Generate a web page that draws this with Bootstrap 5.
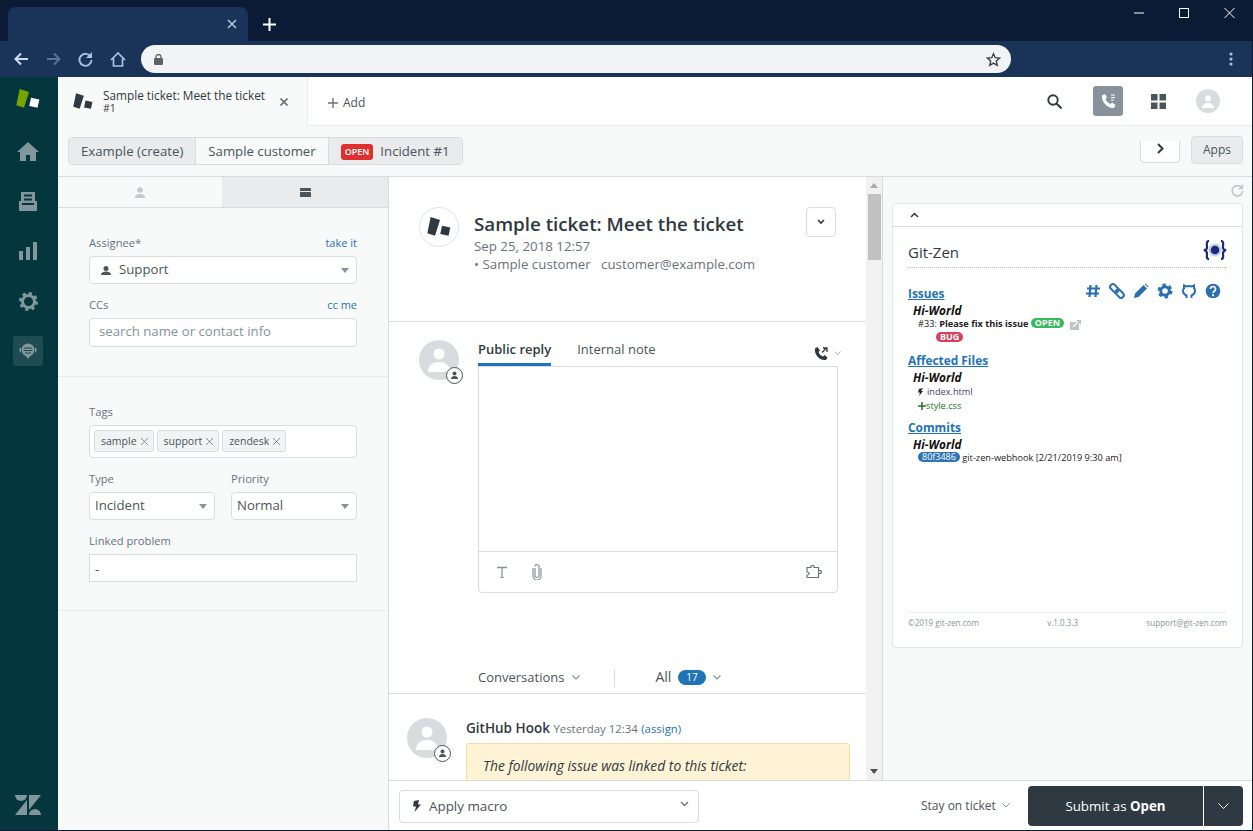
<!doctype html>
<html lang="en"><head><meta charset="utf-8"><title>Sample ticket</title>
<link href="https://cdn.jsdelivr.net/npm/bootstrap@5.3.0/dist/css/bootstrap.min.css" rel="stylesheet">
<style>
html,body{height:831px;overflow:hidden}
body{background:#0b1a35;font-family:"Open Sans","Noto Sans",sans-serif;color:#2f3941;font-size:13.2px;line-height:20px}
svg{display:block;flex:none}
.bw-strip{height:41px;padding-left:8px;background:#0b1a35}
.bw-tab{width:240px;height:34px;margin-top:7px;background:#1a3358;border-radius:8px 8px 0 0;padding-right:11px}
.bw-new{margin-left:15px;margin-top:18px}
.bw-ctrls{margin-left:auto;gap:35px;padding:6px 18px 0 0}
.bw-bar{height:36px;background:#1a3358;padding-left:14px;width:1252px}
.bw-nav{gap:17px;width:127px}
.bw-omni{width:870px;height:28px;background:#f1f3f4;border-radius:14px;padding:0 10px 0 13px}
.bw-menu{margin-left:auto;margin-right:19px}
.zd-app{width:1252px;height:753px}
.zd-rail{width:58px;background:#03363d;padding:12px 2px 15px 0}
.zd-railitem{width:30px;height:30px;border-radius:3px;margin-bottom:20px}
.zd-railitem.on{background:#1f4c53}
.zd-mark{margin-bottom:27px}
.zd-top{height:49px;background:#fff}
.zd-tab{width:250px;background:#f8f9f9;padding:0 19px 0 15px;border-right:1px solid #e9ebed;height:49px;margin-bottom:-1px;position:relative;z-index:1}
.zd-tabtitle{font-size:11.8px;line-height:13px;margin-left:10px;width:170px;white-space:nowrap}
.zd-tabtitle small{font-size:10.5px;display:block;line-height:12px}
.zd-add{font-size:12px;color:#49545c;margin-left:20px;gap:5px;padding-top:3px}
.zd-topright{margin-left:auto;margin-right:32px}
.zd-search{margin-right:31px}
.zd-call{width:30px;height:30px;background:#87929d;border-radius:3px;margin-right:28px}
.zd-grid{margin-right:30px}
.zd-face{width:24px;height:24px;border-radius:50%;background:#d8dcde}
.zd-topline{border-bottom:1px solid #e9ebed}
.zd-sub{height:51px;background:#f8f9f9;border-bottom:1px solid #d8dcde;padding:11px 9px 0 10px}
.zd-crumbs{height:28px;border:1px solid #d8dcde;border-radius:4px;overflow:hidden}
.zd-crumb{padding:0 12px;height:26px;line-height:26px;color:#49545c;background:#e9ebed;border-left:1px solid #d8dcde;white-space:nowrap}
.zd-crumb:first-child{border-left:0}
.zd-crumb.on{background:#f8f9f9}
.zd-open{background:#e02f2f;color:#fff;font-size:9px;font-weight:600;border-radius:3px;padding:0 4px;height:16px;line-height:16px;margin-right:7px;display:inline-block;vertical-align:1px}
.zd-next{width:40px;height:22px;margin-top:4px;padding-bottom:6px;border:1px solid #d8dcde;border-top:0;border-radius:0 0 4px 4px;background:#fff;margin-left:auto;margin-right:11px}
.zd-apps{width:52px;height:28px;margin-top:-1px;background:#e9ebed;border:1px solid #d8dcde;border-radius:4px;font-size:12px;line-height:26px;text-align:center;color:#49545c}
.zd-body{height:653px}
.zd-rowmain{height:603px}
.zd-left{width:331px;background:#f8f9f9;border-right:1px solid #d8dcde}
.zd-ltabs{height:31px;border-bottom:1px solid #d8dcde}
.zd-ltabs>div{height:30px}
.zd-ltabs>div:last-child{background:#e9ebed;width:166px;border-left:1px solid #e9ebed}
.zd-sec{padding:27px 31px 29px;border-bottom:1px solid #e9ebed}
.zd-sec.two{padding:27px 31px 28px}
.zd-lab{height:21px;font-size:11.2px;line-height:16px;color:#68737d;white-space:nowrap}
.zd-lab.gap{margin-top:13px}
.zd-link{font-size:11px;color:#1f73b7;margin-left:auto}
.zd-sel{height:28px;background:#fff;border:1px solid #d8dcde;border-radius:4px;padding:0 7px 0 5px;color:#49545c;line-height:25px}
.zd-sel>span:first-of-type{padding-bottom:1px}
.zd-pi{margin:0 8px 0 6px}
.zd-caret{width:0;height:0;border:4px solid transparent;border-top:5px solid #87929d;border-bottom:0;margin-left:auto;padding:0!important}
.zd-in{height:29px;background:#fff;border:1px solid #d8dcde;border-radius:4px;padding:0 9px;color:#87929d;line-height:25px}
.zd-tags{height:33px;background:#fff;border:1px solid #d8dcde;border-radius:4px;padding:4px;gap:3px}
.zd-pill{height:22px;padding:0 5px 0 6px;background:#f2f3f4;border:1px solid #d8dcde;border-radius:3px;font-size:10.5px;line-height:20px;color:#49545c;gap:4px}
.zd-mt{margin-top:13px}
.zd-two{gap:16px}
.zd-two>div{flex:1}
.zd-lp{height:28px;background:#fff;border:1px solid #d8dcde;padding:0 5px;line-height:28px;color:#49545c}
.zd-mid{width:477px;background:#fff;overflow:hidden}
.zd-head{height:145px;padding:30px 30px 0;border-bottom:1px solid #d8dcde}
.zd-circ{width:40px;height:40px;border-radius:50%;border:1px solid #e0e3e5}
.zd-ttl{margin-left:15px}
.zd-ttl h1{font-size:18.750px;font-weight:600;line-height:24px;margin:5px 0 1px;color:#2f3941;white-space:nowrap}
.zd-ttl p{margin:0;font-size:13.300px;line-height:18px;color:#68737d;white-space:nowrap}
.zd-more{width:30px;height:30px;border:1px solid #d8dcde;border-radius:4px;margin-left:auto}
.zd-reply{padding:18px 28px 0 30px;gap:19px}
.zd-av{width:40px;height:40px;border-radius:50%;background:#d8dcde;position:relative;flex:none}
.zd-avbadge{position:absolute;right:-4px;bottom:-4px;width:17px;height:17px;border-radius:50%;background:#fff;border:1px solid #49545c}
.zd-rbody{width:360px}
.zd-rtabs{height:26px}
.zd-rtab{height:26px;margin-right:26px;line-height:18px;color:#49545c;white-space:nowrap;font-size:13px}
.zd-rtab.on{color:#2f3941;font-weight:600;border-bottom:3px solid #1f73b7}
.zd-rcall{margin-left:auto;gap:5px;margin-right:-3px}
.zd-edit{height:227px;border:1px solid #d8dcde;border-radius:0 0 4px 4px}
.zd-area{height:185px;border-bottom:1px solid #d8dcde}
.zd-tools{height:40px;padding:0 15px 0 17px;gap:24px}
.zd-conv{height:101px;padding:0 0 6px 89px;border-bottom:1px solid #d8dcde;color:#49545c;font-size:13px}
.zd-sep{width:1px;height:18px;background:#d8dcde;margin:0 40px 0 34px}
.zd-all{font-size:14px;color:#49545c}
.zd-cnt{background:#1f73b7;color:#fff;font-size:10px;line-height:15px;height:15px;padding:0 8px;border-radius:8px;margin:0 7px 0 7px}
.zd-cmt{padding:24px 16px 0 18px;gap:19px}
.zd-who{font-size:13.500px;font-weight:600;line-height:20px;white-space:nowrap;color:#2f3941}
.zd-who span{font-size:11.400px;font-weight:400;color:#68737d}
.zd-who b{font-size:11.400px;font-weight:400;color:#1f73b7}
.zd-note{width:384px;height:60px;margin-top:4px;background:#fff3d6;border:1px solid #f7dca0;border-radius:3px;padding:12px 16px;font-style:italic;font-size:13.850px;color:#2f3941;white-space:nowrap}
.zd-scroll{width:17px;background:#f1f1f1;border-right:1px solid #d8dcde;padding-top:17px;height:603px}
.zd-thumb{width:13px;height:66px;background:#c1c1c1;margin-left:2px}
.zd-up,.zd-down{position:absolute;left:4px;width:0;height:0;border:4px solid transparent}
.zd-up{top:6px;border-bottom:5px solid #a8a8a8;border-top:0}
.zd-down{bottom:6px;border-top:5px solid #505050;border-bottom:0}
.zd-rpanel{flex:1;background:#f8f9f9;padding:7px 9px 0 9px;height:603px}
.zd-refresh{height:19px;justify-content:flex-end;margin-right:-1px}
.zd-appcard{height:445px;border:1px solid #e3e6e8;border-radius:4px;background:#fff}
.zd-apphead{height:23px;border-bottom:1px solid #d8dcde;padding-left:17px}
.zd-appbody{padding:13px 15px 0}
.zd-apptitle{height:28px;border-bottom:1px dotted #b5b5b5;font-size:15px;line-height:24px;color:#2f3941}
.zd-issuerow{margin-top:17px}
.zd-sect{font-size:11.900px;font-weight:700;line-height:16px;color:#1f73b7;text-decoration:underline;white-space:nowrap}
.zd-sect.next{display:block;margin-top:7px}
.zd-ic{gap:8px;margin-left:auto;margin-right:6px;margin-top:-2px}
.zd-repo{font-size:11.800px;font-style:italic;font-weight:700;color:#111;line-height:14px;margin:2px 0 0 5px}
.zd-line{font-size:9.200px;line-height:14px;margin-left:10px;color:#222;white-space:nowrap}
.zd-line.file{margin-top:1px;color:#3b3f78}
.zd-line.add{line-height:13px;color:#257325}
.zd-bugline{padding-left:18px}
.zd-pillb{display:inline-block;font-size:9px;font-weight:700;color:#fff;border-radius:7px;padding:0 4px;line-height:10px;vertical-align:1px}
.zd-foot{border-top:1px solid #e9ebed;font-size:8.100px;color:#87929d;line-height:20px;white-space:nowrap;margin-top:147px}
.zd-bot{height:50px;background:#fff;border-top:1px solid #d8dcde}
.zd-botleft{width:331px;background:#f8f9f9;border-right:1px solid #d8dcde;height:50px;margin-top:-1px}
.zd-macro{width:300px;height:33px;margin:9px 0 0 10px;border:1px solid #d8dcde;border-radius:4px;padding:0 9px 2px 13px;gap:8px;color:#49545c;font-size:13.400px}
.zd-stay{margin-left:222px;gap:6px;font-size:12px;color:#49545c;white-space:nowrap;width:107px}
.zd-subbtn{width:175px;height:40px;background:#2f3941;color:#fff;border-radius:4px 0 0 4px;font-size:13.300px;line-height:40px;text-align:center;margin-top:5px}
.zd-subdrop{width:40px;height:40px;background:#2f3941;border-left:1px solid #fff;border-radius:0 4px 4px 0;margin-top:5px}
</style></head>
<body>
<div class="d-flex bw-strip">
  <div class="bw-tab d-flex align-items-center justify-content-end"><svg width="10" height="10" viewBox="0 0 10 10"><path d="M1 1l8 8M9 1l-8 8" stroke="#b7c3d4" stroke-width="1.6"/></svg></div>
  <div class="bw-new"><svg width="13" height="13" viewBox="0 0 13 13"><path d="M6.500 0v13M0 6.500h13" stroke="#fff" stroke-width="2"/></svg></div>
  <div class="bw-ctrls d-flex">
    <svg width="10" height="14" viewBox="0 0 10 14"><path d="M0 7h10" stroke="#fff"/></svg>
    <svg width="10" height="14" viewBox="0 0 10 14"><rect x=".5" y="2.500" width="9" height="9" fill="none" stroke="#fff"/></svg>
    <svg width="11" height="14" viewBox="0 0 11 14"><path d="M.5 2l10 10M10.500 2l-10 10" stroke="#fff"/></svg>
  </div>
</div>
<div class="d-flex align-items-center bw-bar">
  <div class="d-flex align-items-center bw-nav">
    <svg width="15" height="14" viewBox="0 0 15 14"><path d="M14 7H2M7 1.500L1.500 7 7 12.500" fill="none" stroke="#d3dcea" stroke-width="2"/></svg>
    <svg width="15" height="14" viewBox="0 0 15 14"><path d="M1 7h12M8 1.500L13.500 7 8 12.500" fill="none" stroke="#5c7396" stroke-width="2"/></svg>
    <svg width="15" height="15" viewBox="0 0 15 15"><path d="M12.500 4.500A6 6 0 1 0 13.500 8" fill="none" stroke="#a9c3e6" stroke-width="1.900"/><path d="M14 0v6H8z" fill="#a9c3e6"/></svg>
    <svg width="16" height="15" viewBox="0 0 16 15"><path d="M1 8l7-7 7 7M3.500 6.500V14h9V6.500" fill="none" stroke="#a9c3e6" stroke-width="1.700"/></svg>
  </div>
  <div class="bw-omni d-flex align-items-center justify-content-between">
    <svg width="9" height="11" viewBox="0 0 9 11"><rect y="4" width="9" height="7" rx="1" fill="#5f6368"/><path d="M2 5V3a2.500 2.500 0 0 1 5 0v2" fill="none" stroke="#5f6368" stroke-width="1.300"/></svg>
    <svg width="15" height="15" viewBox="0 0 24 24"><path d="M12 2.800l2.800 6.300 6.900.7-5.200 4.600 1.500 6.800-6-3.500-6 3.500 1.500-6.800-5.200-4.600 6.900-.7z" fill="none" stroke="#3c4043" stroke-width="2.200"/></svg>
  </div>
  <svg class="bw-menu" width="4" height="14" viewBox="0 0 4 14"><g fill="#a9c3e6"><circle cx="2" cy="2" r="1.600"/><circle cx="2" cy="7" r="1.600"/><circle cx="2" cy="12" r="1.600"/></g></svg>
</div>
<div class="d-flex zd-app">
  <nav class="zd-rail d-flex flex-column align-items-center">
    <svg class="zd-mark" width="24" height="20" viewBox="0 0 24 20"><path d="M3.700 0L13 3 8 18.700.3 16.300z" fill="#78a300"/><rect x="14" y="9.500" width="8.500" height="8.500" transform="rotate(12 18 14)" fill="#fff"/></svg>
    <div class="zd-railitem d-flex align-items-center justify-content-center"><svg width="22" height="19" viewBox="0 0 22 19"><path d="M11 0L0 10h3v9h6v-6h4v6h6v-9h3z" fill="#81979b"/></svg></div>
    <div class="zd-railitem d-flex align-items-center justify-content-center"><svg width="18" height="19" viewBox="0 0 18 19"><path d="M2 0h14v11H2z" fill="#81979b"/><path d="M5 3.500h8M5 7.500h8" stroke="#03363d" stroke-width="2"/><path d="M0 9h3v4h12V9h3v10H0z" fill="#81979b"/></svg></div>
    <div class="zd-railitem d-flex align-items-center justify-content-center"><svg width="18" height="18" viewBox="0 0 18 18"><path d="M0 9h4v9H0zM7 5h4v13H7zM14 0h4v18h-4z" fill="#81979b"/></svg></div>
    <div class="zd-railitem d-flex align-items-center justify-content-center"><svg width="19" height="19" viewBox="0 0 19 19"><circle cx="9.500" cy="9.500" r="6" fill="none" stroke="#81979b" stroke-width="3"/><circle cx="9.500" cy="9.500" r="8" fill="none" stroke="#81979b" stroke-width="3" stroke-dasharray="3.200 3.080"/></svg></div>
    <div class="zd-railitem on d-flex align-items-center justify-content-center"><svg width="18" height="16" viewBox="0 0 18 16"><circle cx="9" cy="7" r="6.500" fill="#81979b"/><path d="M5 5h8M4.500 7.500h9M6 10h6" stroke="#1f4c53" stroke-width="1.200"/><path d="M2 4L0 7l2 3M16 4l2 3-2 3M7 13h4l-2 3z" fill="#81979b"/></svg></div>
    <svg class="mt-auto" width="26" height="20" viewBox="0 0 26 20"><g fill="#81979b"><path d="M12 5v15H0z"/><path d="M12 0a6 6 0 0 1-12 0z"/><path d="M14 15V0h12z"/><path d="M14 20a6 6 0 0 1 12 0z"/></g></svg>
  </nav>
  <main class="flex-grow-1 d-flex flex-column">
    <div class="d-flex zd-top zd-topline">
      <div class="zd-tab d-flex align-items-center">
        <svg width="20" height="17" viewBox="0 0 24 20"><path d="M3.700 0L13 3 8 18.700.3 16.300z" fill="#2f3941"/><rect x="14" y="9.500" width="8.500" height="8.500" transform="rotate(12 18 14)" fill="#2f3941"/></svg>
        <div class="zd-tabtitle">Sample ticket: Meet the ticket<small>#1</small></div>
        <svg class="ms-auto" width="8" height="8" viewBox="0 0 8 8"><path d="M.5.500l7 7M7.500.500l-7 7" stroke="#68737d" stroke-width="1.600"/></svg>
      </div>
      <div class="zd-add d-flex align-items-center"><svg width="10" height="10" viewBox="0 0 10 10"><path d="M5 0v10M0 5h10" stroke="#68737d" stroke-width="1.400"/></svg>Add</div>
      <div class="zd-topright d-flex align-items-center">
        <svg class="zd-search" width="15" height="15" viewBox="0 0 15 15"><circle cx="6" cy="6" r="4.700" fill="none" stroke="#2f3941" stroke-width="1.900"/><path d="M9.500 9.500l5 5" stroke="#2f3941" stroke-width="2"/></svg>
        <div class="zd-call d-flex align-items-center justify-content-center"><svg width="15" height="15" viewBox="0 0 15 15"><path d="M1 1.500L4 0l2 3.500-1.500 1.500c.8 2 2.500 3.800 5 5L11 8.500l3.500 2.500-1.500 3C7 15 0 8 1 1.500z" fill="#fff"/><path d="M10 1h4M10 3.500h4M10 6h3" stroke="#fff"/></svg></div>
        <svg class="zd-grid" width="15" height="15" viewBox="0 0 15 15"><g fill="#49545c"><rect width="6.500" height="6.500"/><rect x="8.500" width="6.500" height="6.500"/><rect y="8.500" width="6.500" height="6.500"/><rect x="8.500" y="8.500" width="6.500" height="6.500"/></g></svg>
        <div class="zd-face d-flex align-items-center justify-content-center"><svg width="12" height="13" viewBox="0 0 12 13"><circle cx="6" cy="3.500" r="3" fill="#fff"/><path d="M0 13c0-3 2.500-5 6-5s6 2 6 5z" fill="#fff"/></svg></div>
      </div>
    </div>
    <div class="d-flex zd-sub">
      <div class="d-flex zd-crumbs">
        <div class="zd-crumb">Example (create)</div>
        <div class="zd-crumb on">Sample customer</div>
        <div class="zd-crumb"><span class="zd-open">OPEN</span>Incident #1</div>
      </div>
      <div class="zd-next d-flex align-items-center justify-content-center"><svg width="7" height="11" viewBox="0 0 7 11"><path d="M1 1l4.500 4.500L1 10" fill="none" stroke="#2f3941" stroke-width="2"/></svg></div>
      <div class="zd-apps">Apps</div>
    </div>
    <div class="d-flex zd-body flex-column">
      <div class="d-flex zd-rowmain">
        <aside class="zd-left">
          <div class="zd-ltabs d-flex">
            <div class="flex-grow-1 d-flex align-items-center justify-content-center"><svg width="10" height="11" viewBox="0 0 10 11"><circle cx="5" cy="3" r="2.800" fill="#c2c8cc"/><path d="M0 11c0-3 2-4 5-4s5 1 5 4z" fill="#c2c8cc"/></svg></div>
            <div class="d-flex align-items-center justify-content-center"><svg width="11" height="9" viewBox="0 0 11 9"><rect width="11" height="3" rx=".6" fill="#49545c"/><rect y="4" width="11" height="5" rx=".6" fill="#49545c"/></svg></div>
          </div>
          <div class="zd-sec">
            <div class="zd-lab d-flex"><span>Assignee*</span><span class="zd-link">take it</span></div>
            <div class="zd-sel d-flex align-items-center"><svg class="zd-pi" width="10" height="9" viewBox="0 0 10 9"><circle cx="5" cy="2.500" r="2.500" fill="#49545c"/><path d="M0 9c0-2 2-3.500 5-3.500S10 7 10 9z" fill="#49545c"/></svg><span>Support</span><span class="zd-caret"></span></div>
            <div class="zd-lab gap d-flex"><span>CCs</span><span class="zd-link">cc me</span></div>
            <div class="zd-in">search name or contact info</div>
          </div>
          <div class="zd-sec two">
            <div class="zd-lab">Tags</div>
            <div class="zd-tags d-flex">
              <span class="zd-pill d-flex align-items-center">sample<svg width="7" height="7" viewBox="0 0 7 7"><path d="M0 0l7 7M7 0L0 7" stroke="#68737d" stroke-width=".8"/></svg></span>
              <span class="zd-pill d-flex align-items-center">support<svg width="7" height="7" viewBox="0 0 7 7"><path d="M0 0l7 7M7 0L0 7" stroke="#68737d" stroke-width=".8"/></svg></span>
              <span class="zd-pill d-flex align-items-center">zendesk<svg width="7" height="7" viewBox="0 0 7 7"><path d="M0 0l7 7M7 0L0 7" stroke="#68737d" stroke-width=".8"/></svg></span>
            </div>
            <div class="d-flex zd-two zd-mt">
              <div><div class="zd-lab">Type</div><div class="zd-sel d-flex align-items-center"><span>Incident</span><span class="zd-caret"></span></div></div>
              <div><div class="zd-lab">Priority</div><div class="zd-sel d-flex align-items-center"><span>Normal</span><span class="zd-caret"></span></div></div>
            </div>
            <div class="zd-lab zd-mt">Linked problem</div>
            <div class="zd-lp">-</div>
          </div>
        </aside>
        <section class="zd-mid">
          <div class="zd-head d-flex align-items-start">
            <div class="zd-circ d-flex align-items-center justify-content-center"><svg width="24" height="20" viewBox="0 0 24 20"><path d="M3.700 0L13 3 8 18.700.3 16.300z" fill="#2f3941"/><rect x="14" y="9.500" width="8.500" height="8.500" transform="rotate(12 18 14)" fill="#2f3941"/></svg></div>
            <div class="zd-ttl"><h1>Sample ticket: Meet the ticket</h1><p>Sep 25, 2018 12:57</p><p>• Sample customer &nbsp; customer@example.com</p></div>
            <div class="zd-more d-flex align-items-center justify-content-center"><svg width="8" height="6" viewBox="0 0 8 6"><path d="M1 1l3 3 3-3" fill="none" stroke="#2f3941" stroke-width="1.600"/></svg></div>
          </div>
          <div class="zd-reply d-flex">
            <div class="zd-av d-flex align-items-center justify-content-center"><svg width="22" height="24" viewBox="0 0 22 24"><circle cx="11" cy="6" r="5.500" fill="#fff"/><path d="M0 24c0-7 5-10 11-10s11 3 11 10z" fill="#fff"/></svg><span class="zd-avbadge d-flex align-items-center justify-content-center"><svg width="9" height="9" viewBox="0 0 9 9"><circle cx="4.500" cy="2.500" r="2" fill="#49545c"/><path d="M1 8c0-2 1.500-3 3.500-3S8 6 8 8z" fill="#49545c"/></svg></span></div>
            <div class="zd-rbody">
              <div class="zd-rtabs d-flex">
                <div class="zd-rtab on">Public reply</div>
                <div class="zd-rtab">Internal note</div>
                <div class="zd-rcall d-flex align-items-center"><svg width="15" height="15" viewBox="0 0 15 15"><path d="M1 2.500L3.500 1 6 4.500 4.500 6c.8 2 2.500 3.500 4.500 4.500L10.500 9l3 2.500L12 14C6 15 0 9 1 2.500z" fill="#2f3941"/><path d="M8 6.500L12 2.500M9 2h4v4" fill="none" stroke="#2f3941" stroke-width="1.300"/></svg><svg width="7" height="5" viewBox="0 0 7 5"><path d="M.5.500l3 3 3-3" fill="none" stroke="#a5adb3"/></svg></div>
              </div>
              <div class="zd-edit">
                <div class="zd-area"></div>
                <div class="zd-tools d-flex align-items-center">
                  <svg width="12" height="12" viewBox="0 0 12 12"><path d="M1 1.500h10M6 1.500V12M4 12h4" fill="none" stroke="#87929d" stroke-width="1.300"/></svg>
                  <svg width="10" height="16" viewBox="0 0 10 16"><path d="M3 4v7.500a2 2 0 0 0 4 0V3a2 2 0 0 0-4-.500" fill="none" stroke="#87929d" stroke-width="1.200"/><path d="M1 4v8a4 4 0 0 0 8 0V4" fill="none" stroke="#87929d" stroke-width="1.200"/></svg>
                  <svg class="ms-auto" width="16" height="14" viewBox="0 0 16 14"><path d="M1 2.500h4C4.500 1 5.500.500 6.500.500S8.500 1 8 2.500h4.500V6c1-.8 3-.5 3 1s-2 2-3 1v4.500H1V10c1 0 2-.5 2-1.500S2 7 1 7z" fill="none" stroke="#68737d" stroke-width="1.200"/></svg>
                </div>
              </div>
            </div>
          </div>
          <div class="zd-conv d-flex align-items-end">
            <div class="d-flex align-items-center"><span>Conversations</span><svg class="ms-2" width="8" height="5" viewBox="0 0 8 5"><path d="M.5.500L4 4 7.500.500" fill="none" stroke="#87929d" stroke-width="1.200"/></svg></div>
            <div class="zd-sep"></div>
            <div class="d-flex align-items-center zd-all"><span>All</span><span class="zd-cnt">17</span><svg width="8" height="5" viewBox="0 0 8 5"><path d="M.5.500L4 4 7.500.500" fill="none" stroke="#87929d" stroke-width="1.200"/></svg></div>
          </div>
          <div class="zd-cmt d-flex">
            <div class="zd-av d-flex align-items-center justify-content-center"><svg width="22" height="24" viewBox="0 0 22 24"><circle cx="11" cy="6" r="5.500" fill="#fff"/><path d="M0 24c0-7 5-10 11-10s11 3 11 10z" fill="#fff"/></svg><span class="zd-avbadge d-flex align-items-center justify-content-center"><svg width="9" height="9" viewBox="0 0 9 9"><circle cx="4.500" cy="2.500" r="2" fill="#49545c"/><path d="M1 8c0-2 1.500-3 3.500-3S8 6 8 8z" fill="#49545c"/></svg></span></div>
            <div>
              <div class="zd-who">GitHub Hook <span>Yesterday 12:34</span> <b>(assign)</b></div>
              <div class="zd-note">The following issue was linked to this ticket:</div>
            </div>
          </div>
        </section>
        <div class="zd-scroll position-relative"><span class="zd-up"></span><div class="zd-thumb"></div><span class="zd-down"></span></div>
        <aside class="zd-rpanel">
          <div class="zd-refresh d-flex"><svg width="13" height="13" viewBox="0 0 15 15"><path d="M12.500 4.500A6 6 0 1 0 13.500 8" fill="none" stroke="#c2c8cc" stroke-width="2"/><path d="M14 0v6H8z" fill="#c2c8cc"/></svg></div>
          <div class="card zd-appcard">
            <div class="zd-apphead d-flex align-items-center"><svg width="9" height="6" viewBox="0 0 9 6"><path d="M1 5l3.500-3.500L8 5" fill="none" stroke="#2f3941" stroke-width="1.500"/></svg></div>
            <div class="zd-appbody">
              <div class="zd-apptitle d-flex">Git-Zen<svg class="ms-auto" width="24" height="20" viewBox="0 0 24 20"><path d="M6 1C3 1 4 4 4 7S3 9.500 1 10c2 .5 3 1.500 3 3.500s-1 5.500 2 5.500M18 1c3 0 2 3 2 6s1 2.500 3 3c-2 .5-3 1.500-3 3.500s1 5.500-2 5.500" fill="none" stroke="#1d2a78" stroke-width="2.200"/><circle cx="12" cy="10" r="6.500" fill="#c6cdf0"/><circle cx="12" cy="10" r="4.300" fill="#1d2a78"/></svg></div>
              <div class="d-flex align-items-start zd-issuerow"><a class="zd-sect">Issues</a>
                <div class="zd-ic d-flex align-items-center">
                  <svg width="16" height="16" viewBox="0 0 16 16"><path d="M5.500 2L4.500 14M11.500 2l-1 12M2 5.500h13M1 10.500h13" stroke="#2a6fb0" stroke-width="2.200"/></svg>
                  <svg width="16" height="16" viewBox="0 0 16 16"><g transform="rotate(45 8 8)" fill="none" stroke="#2a6fb0" stroke-width="2"><rect x="-.5" y="5.300" width="9.500" height="5.400" rx="2.700"/><rect x="7" y="5.300" width="9.500" height="5.400" rx="2.700"/></g></svg>
                  <svg width="16" height="16" viewBox="0 0 16 16"><path d="M1 15l1-4.500L10.500 2l3.500 3.500L5.500 14zM11.500 1l1-.5 3 3-.5 1z" fill="#2a6fb0"/></svg>
                  <svg width="16" height="16" viewBox="0 0 16 16"><circle cx="8" cy="8" r="4.300" fill="none" stroke="#2a6fb0" stroke-width="3"/><circle cx="8" cy="8" r="6.300" fill="none" stroke="#2a6fb0" stroke-width="2.400" stroke-dasharray="3.300 3.300"/></svg>
                  <svg width="16" height="16" viewBox="0 0 16 16"><path d="M5.500 15V12.500C3 11.500 2 9.800 2 8 2 7 2.300 6 3 5.300V2.500L5.600 3.500C7 3 9 3 10.400 3.500L13 2.500V5.300C13.700 6 14 7 14 8 14 9.800 13 11.500 10.500 12.500V15" fill="none" stroke="#2a6fb0" stroke-width="2"/></svg>
                  <svg width="16" height="16" viewBox="0 0 16 16"><circle cx="8" cy="8" r="7.300" fill="#2a6fb0"/><path d="M5.500 6a2.500 2.500 0 1 1 3.700 2.200C8.400 8.700 8 9 8 10" fill="none" stroke="#fff" stroke-width="1.700"/><circle cx="8" cy="12.200" r="1.100" fill="#fff"/></svg>
                </div>
              </div>
              <div class="zd-repo">Hi-World</div>
              <div class="zd-line">#33: <strong>Please fix this issue</strong> <span class="zd-pillb" style="background:#37b95c">OPEN</span> <svg class="d-inline-block ms-1" width="11" height="10" viewBox="0 0 11 10"><rect y="2" width="9" height="8" fill="#bfc3c6"/><path d="M3 7l5-5M5 1h5v5" fill="none" stroke="#fff" stroke-width="1.200"/><path d="M6 0h5v5z" fill="#bfc3c6"/></svg></div>
              <div class="zd-line zd-bugline"><span class="zd-pillb" style="background:#d8405b">BUG</span></div>
              <a class="zd-sect next">Affected Files</a>
              <div class="zd-repo">Hi-World</div>
              <div class="zd-line file d-flex align-items-center"><svg class="me-1" width="5" height="8" viewBox="0 0 5 8"><path d="M5 0L1 1 0 4.500h2L1 8l4-5H3z" fill="#222"/></svg>index.html</div>
              <div class="zd-line add d-flex align-items-center"><svg width="8" height="8" viewBox="0 0 8 8"><path d="M4 0v8M0 4h8" stroke="#257325" stroke-width="1.500"/></svg>style.css</div>
              <a class="zd-sect next">Commits</a>
              <div class="zd-repo">Hi-World</div>
              <div class="zd-line"><span class="zd-pillb" style="background:#2e75b6;font-weight:400">80f3486</span> git-zen-webhook [2/21/2019 9:30 am]</div>
              <div class="zd-foot d-flex justify-content-between"><span>©2019 git-zen.com</span><span>v.1.0.3.3</span><span>support@git-zen.com</span></div>
            </div>
          </div>
        </aside>
      </div>
      <div class="d-flex zd-bot">
        <div class="zd-botleft"></div>
        <div class="zd-macro d-flex align-items-center"><svg width="8" height="12" viewBox="0 0 8 12"><path d="M6 0L1 1 0 6.500h3L1.500 12 8 4.500H5z" fill="#2f3941"/></svg><span>Apply macro</span><svg class="ms-auto" width="9" height="10" viewBox="0 0 9 10"><path d="M1 1l3.500 3.500L8 1" fill="none" stroke="#68737d" stroke-width="1.300"/></svg></div>
        <div class="zd-stay d-flex align-items-center">Stay on ticket<svg width="8" height="5" viewBox="0 0 8 5"><path d="M.5.500L4 4 7.500.500" fill="none" stroke="#87929d"/></svg></div>
        <div class="zd-subbtn">Submit as <strong>Open</strong></div>
        <div class="zd-subdrop d-flex align-items-center justify-content-center"><svg width="11" height="6" viewBox="0 0 11 6"><path d="M.5.500l5 5 5-5" fill="none" stroke="#fff"/></svg></div>
      </div>
    </div>
  </main>
</div>
<script src="https://cdn.jsdelivr.net/npm/bootstrap@5.3.0/dist/js/bootstrap.bundle.min.js"></script>
</body></html>
